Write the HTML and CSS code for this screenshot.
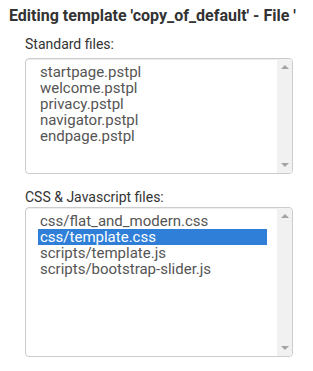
FILE: index.html
```html
<!DOCTYPE html>
<html>
<head>
<meta charset="utf-8">
<link rel="stylesheet" href="styles.css">
</head>
<body>
<h3 class="title">Editing template 'copy_of_default' - File '</h3>
<div class="group first">
  <div class="label">Standard files:</div>
  <div class="listbox small">
    <div class="options">
      <div class="opt">startpage.pstpl</div>
      <div class="opt">welcome.pstpl</div>
      <div class="opt">privacy.pstpl</div>
      <div class="opt">navigator.pstpl</div>
      <div class="opt">endpage.pstpl</div>
    </div>
    <div class="scrollbar"><span class="arrow up"></span><span class="arrow down"></span></div>
  </div>
</div>
<div class="group second">
  <div class="label">CSS &amp; Javascript files:</div>
  <div class="listbox large">
    <div class="options">
      <div class="opt">css/flat_and_modern.css</div>
      <div class="opt selected">css/template.css</div>
      <div class="opt">scripts/template.js</div>
      <div class="opt">scripts/bootstrap-slider.js</div>
    </div>
    <div class="scrollbar"><span class="arrow up"></span><span class="arrow down"></span></div>
  </div>
</div>
</body>
</html>
```

FILE: styles.css
```css
html, body {
  margin: 0;
  padding: 0;
  background: #fff;
  font-family: Roboto, "Liberation Sans", sans-serif;
  color: #333;
  overflow: hidden;
}
.title {
  margin: 0;
  padding: 6px 0 0 9px;
  font-size: 16px;
  font-weight: bold;
  line-height: 20px;
  white-space: nowrap;
  color: #333;
}
.group {
  margin-left: 25px;
  width: 268px;
}
.group.first {
  margin-top: 9px;
}
.group.second {
  margin-top: 14px;
}
.label {
  font-size: 14px;
  line-height: 18px;
  margin-bottom: 5px;
}
.second .label {
  margin-bottom: 1px;
}
.listbox {
  box-sizing: border-box;
  border: 1px solid #ccc;
  border-radius: 4px;
  display: flex;
  overflow: hidden;
  box-shadow: inset 0 1px 1px rgba(0,0,0,0.075);
}
.small { height: 116px; }
.large { height: 150px; }
.options {
  flex: 1;
  padding: 5px 10px 0 12px;
}
.opt {
  font-size: 15px;
  line-height: 16px;
  padding: 0 2px;
  color: #555;
  white-space: nowrap;
}
.opt.selected {
  background: #2f7fd9;
  color: #fff;
}
.scrollbar {
  width: 15px;
  background: #f1f1f1;
  display: flex;
  flex-direction: column;
  justify-content: space-between;
  align-items: center;
  padding: 6px 0;
  box-sizing: border-box;
}
.arrow {
  width: 0;
  height: 0;
  border-left: 4px solid transparent;
  border-right: 4px solid transparent;
}
.arrow.up { border-bottom: 4px solid #a3a3a3; }
.arrow.down { border-top: 4px solid #a3a3a3; }
```
